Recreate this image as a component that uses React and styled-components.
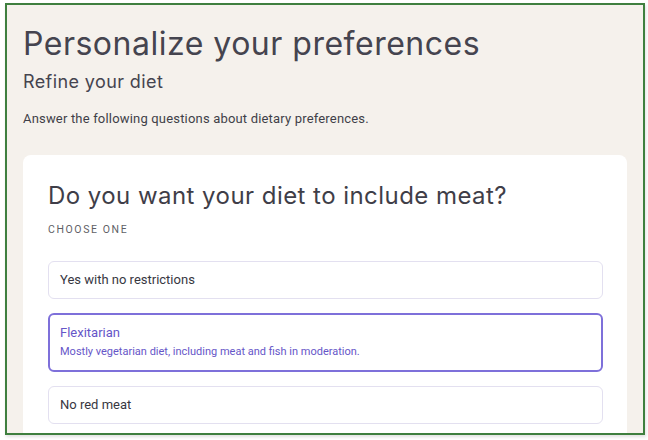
import React from "react";
import styled, { createGlobalStyle } from "styled-components";

const Global = createGlobalStyle`
  html, body { margin: 0; padding: 0; background: #ffffff; }
  body { width: 648px; height: 440px; overflow: hidden; }
  #root { padding: 3px 0 0 5px; height: 440px; box-sizing: border-box; }
`;

const Frame = styled.div`
  box-sizing: border-box;
  width: 640px;
  height: 432px;
  border: 2px solid #3f7f3f;
  background: #f5f1ec;
  overflow: hidden;
  padding: 0 16px 0 16px;
  display: flex;
  flex-direction: column;
  box-shadow: 1px 2px 3px rgba(0,0,0,0.12);
`;

const Title = styled.h1`
  margin: 18.5px 0 0 0;
  font-family: "Inter", sans-serif;
  font-weight: 400;
  font-size: 32px;
  line-height: 40px;
  color: #45444f;
  letter-spacing: 0.5px;
`;

const Subtitle = styled.h2`
  margin: 6.5px 0 0 0;
  font-family: "Inter", sans-serif;
  font-weight: 400;
  font-size: 18px;
  line-height: 24px;
  color: #45444f;
  letter-spacing: 0.4px;
`;

const Intro = styled.p`
  margin: 17px 0 0 0;
  font-family: "Roboto", sans-serif;
  font-size: 13px;
  line-height: 16px;
  color: #3f3f48;
  letter-spacing: 0.18px;
`;

const Card = styled.section`
  margin-top: 28px;
  background: #ffffff;
  border-radius: 8px;
  padding: 24px 24px 20px 25px;
  flex: 1;
  box-sizing: border-box;
`;

const Question = styled.h3`
  margin: 0;
  font-family: "Inter", sans-serif;
  font-weight: 400;
  font-size: 24px;
  line-height: 34px;
  color: #3f3e48;
  letter-spacing: 0.45px;
`;

const Hint = styled.div`
  margin-top: 11px;
  font-family: "Roboto", sans-serif;
  font-size: 10.5px;
  line-height: 12px;
  letter-spacing: 1.6px;
  color: #5f5f66;
  text-transform: uppercase;
`;

const Options = styled.div`
  margin-top: 25px;
  display: flex;
  flex-direction: column;
  gap: 14px;
`;

const Option = styled.div`
  box-sizing: border-box;
  border-radius: 6px;
  border: ${p => (p.$selected ? "2px solid #7e70da" : "1px solid #e3e0f0")};
  padding: ${p => (p.$selected ? "10px 10px 11px 10px" : "10px 11px")};
  font-family: "Roboto", sans-serif;
  color: ${p => (p.$selected ? "#6656c8" : "#37373f")};
`;

const OptionLabel = styled.div`
  font-size: 13px;
  line-height: 16px;
`;

const OptionDesc = styled.div`
  margin-top: 4px;
  font-size: 11px;
  line-height: 14px;
`;

const options = [
  { label: "Yes with no restrictions" },
  { label: "Flexitarian", desc: "Mostly vegetarian diet, including meat and fish in moderation.", selected: true },
  { label: "No red meat" },
];

export default function App() {
  return (
    <>
      <Global />
      <Frame>
        <Title>Personalize your preferences</Title>
        <Subtitle>Refine your diet</Subtitle>
        <Intro>Answer the following questions about dietary preferences.</Intro>
        <Card>
          <Question>Do you want your diet to include meat?</Question>
          <Hint>Choose one</Hint>
          <Options>
            {options.map(o => (
              <Option key={o.label} $selected={o.selected}>
                <OptionLabel>{o.label}</OptionLabel>
                {o.desc && <OptionDesc>{o.desc}</OptionDesc>}
              </Option>
            ))}
          </Options>
        </Card>
      </Frame>
    </>
  );
}
